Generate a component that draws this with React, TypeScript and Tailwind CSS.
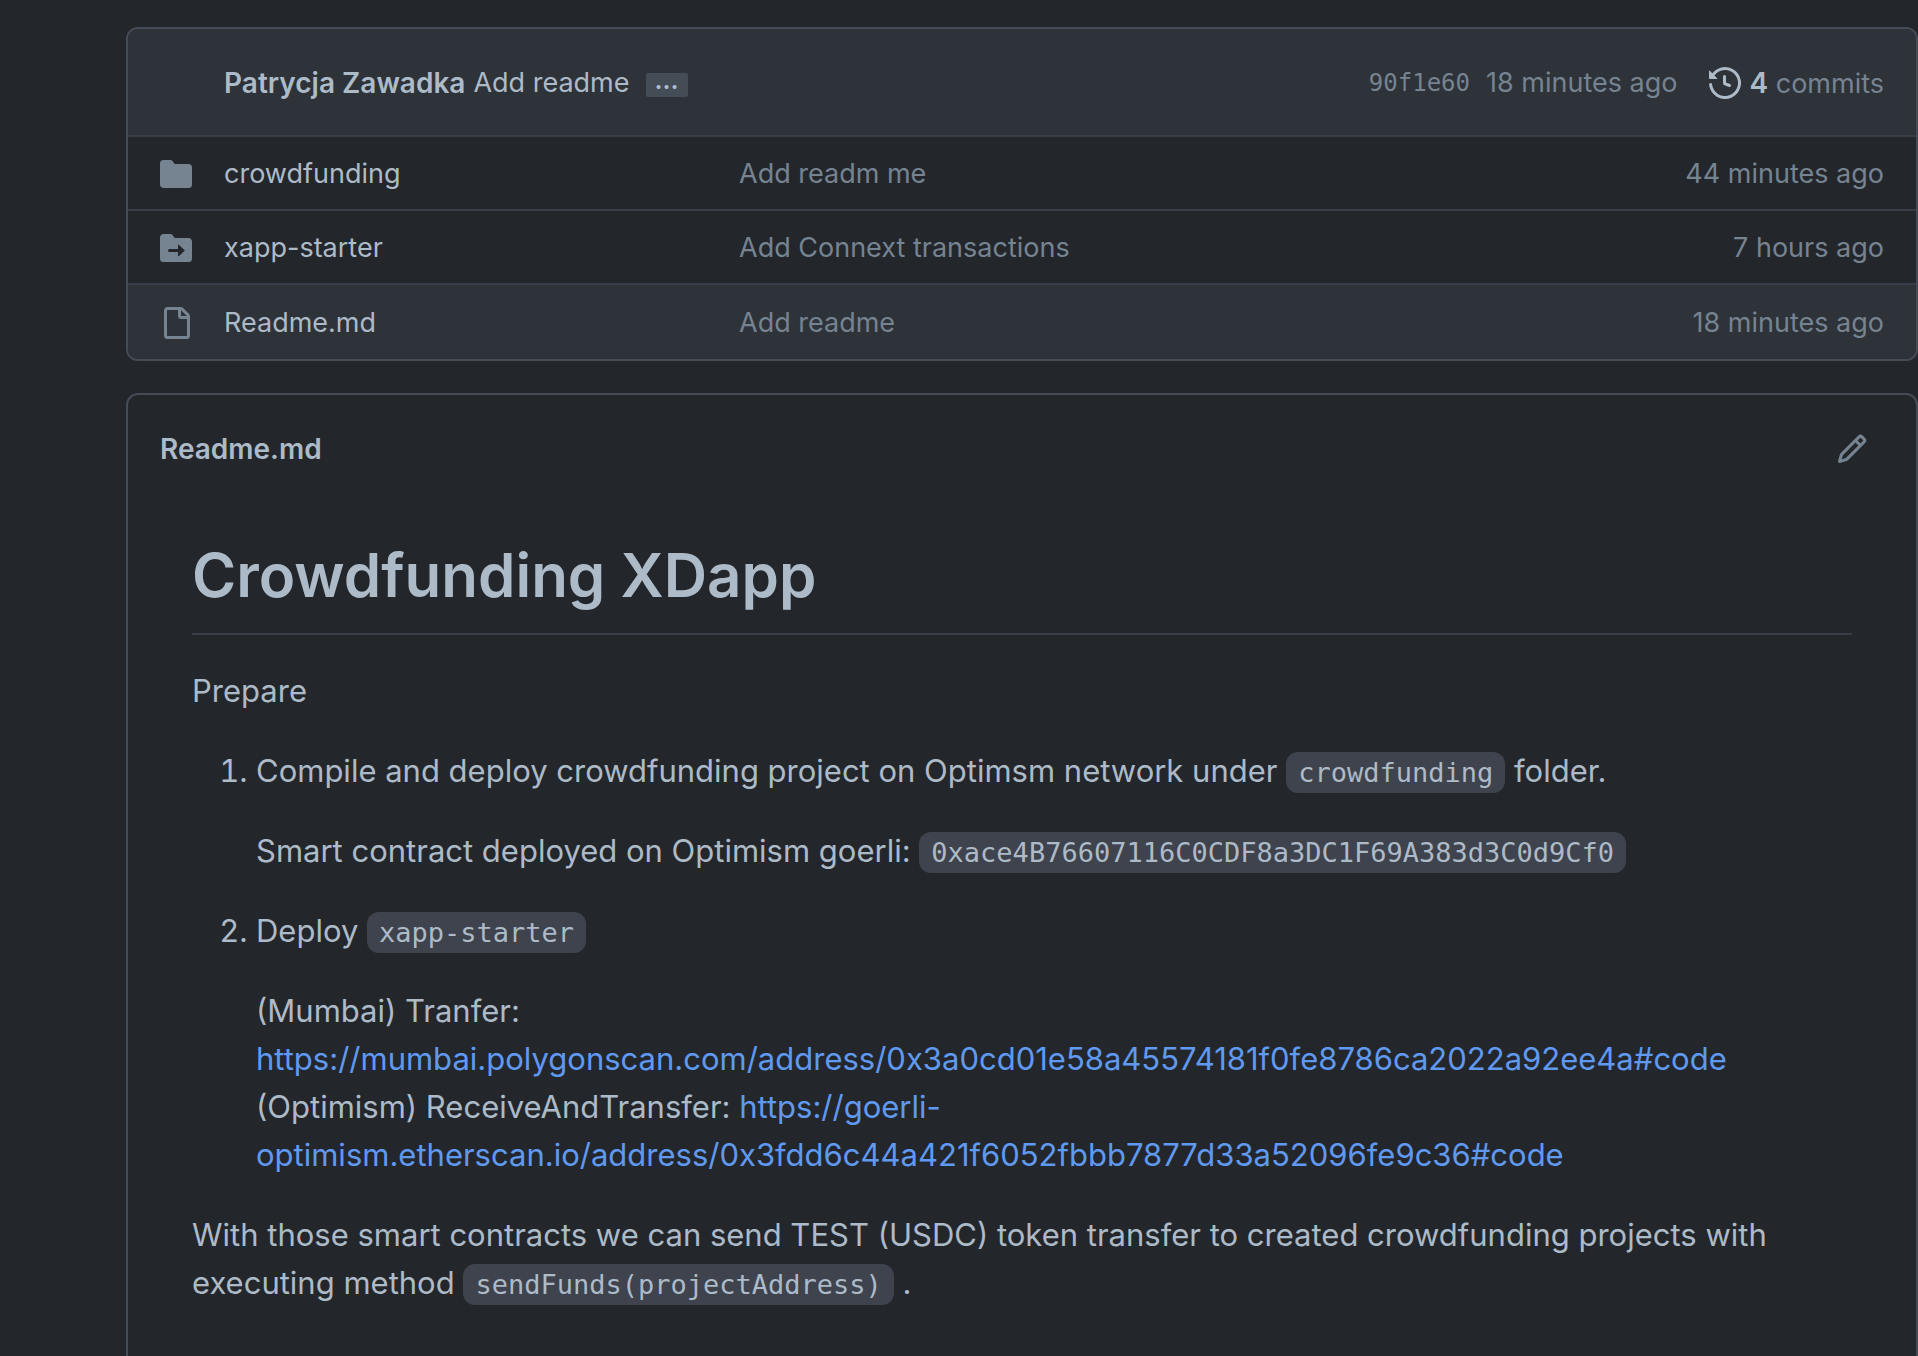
import React from 'react';

const ICONS = {
  folder:
    'M1.75 1A1.75 1.75 0 000 2.75v10.5C0 14.216.784 15 1.75 15h12.5A1.75 1.75 0 0016 13.25v-8.5A1.75 1.75 0 0014.25 3H7.5a.25.25 0 01-.2-.1l-.9-1.2C6.07 1.26 5.55 1 5 1H1.75z',
  submodule:
    'M0 2.75C0 1.784.784 1 1.75 1H5c.55 0 1.07.26 1.4.7l.9 1.2a.25.25 0 00.2.1h6.75c.966 0 1.75.784 1.75 1.75v8.5A1.75 1.75 0 0114.25 15H1.75A1.75 1.75 0 010 13.25V2.75zm9.42 9.36l2.883-2.677a.25.25 0 000-.366L9.42 6.39a.25.25 0 00-.42.183V8.5H4.75a.75.75 0 000 1.5H9v1.927c0 .218.26.331.42.183z',
  file: 'M3.75 1.5a.25.25 0 00-.25.25v12.5c0 .138.112.25.25.25h9.5a.25.25 0 00.25-.25V6h-2.75A1.75 1.75 0 019 4.25V1.5H3.75zm6.75.062V4.25c0 .138.112.25.25.25h2.688a.252.252 0 00-.011-.013l-2.914-2.914a.272.272 0 00-.013-.011zM2 1.75C2 .784 2.784 0 3.75 0h6.586c.464 0 .909.184 1.237.513l2.914 2.914c.329.328.513.773.513 1.237v9.586A1.75 1.75 0 0113.25 16h-9.5A1.75 1.75 0 012 14.25V1.75z',
  history:
    'M1.643 3.143L.427 1.927A.25.25 0 000 2.104V5.75c0 .138.112.25.25.25h3.646a.25.25 0 00.177-.427L2.715 4.215a6.5 6.5 0 11-1.18 4.458.75.75 0 10-1.493.154 8.001 8.001 0 101.6-5.684zM7.75 4a.75.75 0 01.75.75v2.992l2.028.812a.75.75 0 01-.557 1.392l-2.5-1A.75.75 0 017 8.25v-3.5A.75.75 0 017.75 4z',
  pencil:
    'M11.013 1.427a1.75 1.75 0 012.474 0l1.086 1.086a1.75 1.75 0 010 2.474l-8.61 8.61c-.21.21-.47.364-.756.445l-3.251.93a.75.75 0 01-.927-.928l.929-3.25a1.75 1.75 0 01.445-.758l8.61-8.61zm1.414 1.06a.25.25 0 00-.354 0L10.811 3.75l1.439 1.44 1.263-1.263a.25.25 0 000-.354l-1.086-1.086zM11.189 6.25L9.75 4.81l-6.286 6.287a.25.25 0 00-.064.108l-.558 1.953 1.953-.558a.249.249 0 00.108-.064l6.286-6.286z',
};

type IconName = keyof typeof ICONS;

function Icon({ name }: { name: IconName }) {
  return (
    <svg viewBox="0 0 16 16" className="size-8 shrink-0" fill="currentColor" fillRule="evenodd" aria-hidden="true">
      <path d={ICONS[name]} />
    </svg>
  );
}

const FILES: { icon: IconName; name: string; message: string; age: string }[] = [
  { icon: 'folder', name: 'crowdfunding', message: 'Add readm me', age: '44 minutes ago' },
  { icon: 'submodule', name: 'xapp-starter', message: 'Add Connext transactions', age: '7 hours ago' },
  { icon: 'file', name: 'Readme.md', message: 'Add readme', age: '18 minutes ago' },
];

function Code({ children }: { children: React.ReactNode }) {
  return (
    <code className="rounded-xl bg-[#3e434d] px-3 py-[5px] font-['DejaVu_Sans_Mono',monospace] text-[27px] leading-none">
      {children}
    </code>
  );
}

function CommitBar() {
  return (
    <div className="flex h-[106px] items-center justify-between bg-[#2e3239] pt-0.5 pr-8 pl-24">
      <div className="flex items-center">
        <a href="#author" className="text-[28px] font-semibold">Patrycja Zawadka</a>
        <a href="#commit" className="ml-2">Add readme</a>
        <button
          type="button"
          aria-label="Show commit message"
          className="mt-1 ml-4 flex h-6 w-[42px] items-center justify-center rounded-xs bg-[#444c56] pb-2 text-2xl font-bold"
        >
          …
        </button>
      </div>
      <div className="flex items-center text-[#768390]">
        <a href="#commit" className="font-['DejaVu_Sans_Mono',monospace] text-2xl">90f1e60</a>
        <span className="ml-4">18 minutes ago</span>
        <a href="#commits" className="ml-8 flex items-center gap-2">
          <span className="text-[#adbac7]"><Icon name="history" /></span>
          <span>
            <strong className="text-[28px] font-semibold text-[#adbac7]">4</strong> commits
          </span>
        </a>
      </div>
    </div>
  );
}

function FileTable() {
  return (
    <table className="w-full table-fixed border-separate border-spacing-0">
      <colgroup>
        <col className="w-24" />
        <col className="w-[515px]" />
        <col />
        <col className="w-80" />
      </colgroup>
      <tbody className="text-[#768390]">
        {FILES.map((file) => (
          <tr
            key={file.name}
            className="h-[74px] last:h-[76px] last:bg-[#2e3239] *:border-t-2 *:border-[#373e47] *:pt-0.5"
          >
            <td className="pl-8"><Icon name={file.icon} /></td>
            <td>
              <a href={`#${file.name}`} className="text-[#adbac7]">{file.name}</a>
            </td>
            <td>
              <a href="#commit">{file.message}</a>
            </td>
            <td className="pr-8 text-right">{file.age}</td>
          </tr>
        ))}
      </tbody>
    </table>
  );
}

function Readme() {
  return (
    <article className="px-16 pt-16 pb-16 text-[31px] leading-[48px]">
      <h1 className="mb-8 border-b-2 border-[#373e47] pb-4 text-[60px] leading-[84px] font-semibold">
        Crowdfunding XDapp
      </h1>
      <p>Prepare</p>
      <ol className="my-8 list-decimal space-y-8 pl-16">
        <li>
          <p>
            Compile and deploy crowdfunding project on Optimsm network under <Code>crowdfunding</Code> folder.
          </p>
          <p className="mt-8">
            Smart contract deployed on Optimism goerli: <Code>0xace4B76607116C0CDF8a3DC1F69A383d3C0d9Cf0</Code>
          </p>
        </li>
        <li>
          <p>
            Deploy <Code>xapp-starter</Code>
          </p>
          <p className="mt-8">
            (Mumbai) Tranfer:{' '}
            <a
              href="https://mumbai.polygonscan.com/address/0x3a0cd01e58a45574181f0fe8786ca2022a92ee4a#code"
              className="text-[#6099f0]"
            >
              https://mumbai.polygonscan.com/address/0x3a0cd01e58a45574181f0fe8786ca2022a92ee4a#code
            </a>{' '}
            (Optimism) ReceiveAndTransfer:{' '}
            <a
              href="https://goerli-optimism.etherscan.io/address/0x3fdd6c44a421f6052fbbb7877d33a52096fe9c36#code"
              className="text-[#6099f0]"
            >
              https://goerli-optimism.etherscan.io/address/0x3fdd6c44a421f6052fbbb7877d33a52096fe9c36#code
            </a>
          </p>
        </li>
      </ol>
      <p>
        With those smart contracts we can send TEST (USDC) token transfer to created crowdfunding projects with
        executing method <Code>sendFunds(projectAddress)</Code> .
      </p>
    </article>
  );
}

export default function App() {
  return (
    <main className="min-h-screen overflow-hidden bg-[#23272c] pt-[27px] pl-[126px] font-[Inter,sans-serif] text-[27px] leading-10 text-[#adbac7]">
      <section className="overflow-hidden rounded-xl border-2 border-[#464c56]">
        <CommitBar />
        <FileTable />
      </section>

      <section className="mt-8 rounded-t-xl border-2 border-b-0 border-[#464c56]">
        <header className="flex items-center justify-between pt-[34px] pr-12 pl-8">
          <h2 className="text-[28px] font-semibold">Readme.md</h2>
          <button type="button" aria-label="Edit Readme.md" className="text-[#768390]">
            <Icon name="pencil" />
          </button>
        </header>
        <Readme />
      </section>
    </main>
  );
}
